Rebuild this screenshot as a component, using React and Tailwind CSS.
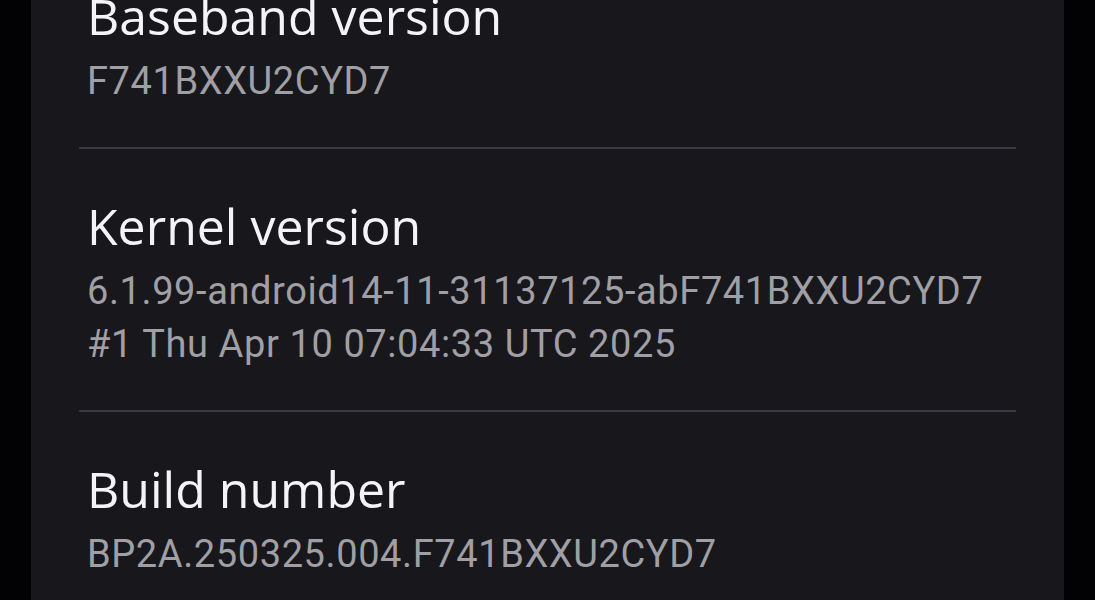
const items = [
  { title: "Baseband version", lines: ["F741BXXU2CYD7"] },
  {
    title: "Kernel version",
    lines: ["6.1.99-android14-11-31137125-abF741BXXU2CYD7", "#1 Thu Apr 10 07:04:33 UTC 2025"],
  },
  { title: "Build number", lines: ["BP2A.250325.004.F741BXXU2CYD7"] },
];

function Item({ title, lines, first }) {
  return (
    <div className={first ? "px-[56px] pb-[39px] -mt-[61px] pt-[49px]" : "px-[56px] pt-[49px] pb-[39px]"}>
      <p
        className="text-[50px] leading-[56px] text-[#f4f4f6]"
        style={{ fontFamily: "'Open Sans', Roboto, sans-serif" }}
      >
        {title}
      </p>
      <div className="mt-[11px] text-[38px] leading-[53px] tracking-[0.6px] text-[#a09fa5]">
        {lines.map((l) => (
          <p key={l}>{l}</p>
        ))}
      </div>
    </div>
  );
}

export default function App() {
  return (
    <div
      className="h-[600px] w-[1095px] overflow-hidden bg-[#020104] px-[31px]"
      style={{ fontFamily: "Roboto, 'Noto Sans', sans-serif" }}
    >
      <div className="flex h-full flex-col bg-[#18171c]">
        {items.map((item, i) => (
          <div key={item.title} className="shrink-0">
            {i > 0 && <div className="mx-[48px] h-[2px] bg-[#3b3a40]" />}
            <Item {...item} first={i === 0} />
          </div>
        ))}
      </div>
    </div>
  );
}
